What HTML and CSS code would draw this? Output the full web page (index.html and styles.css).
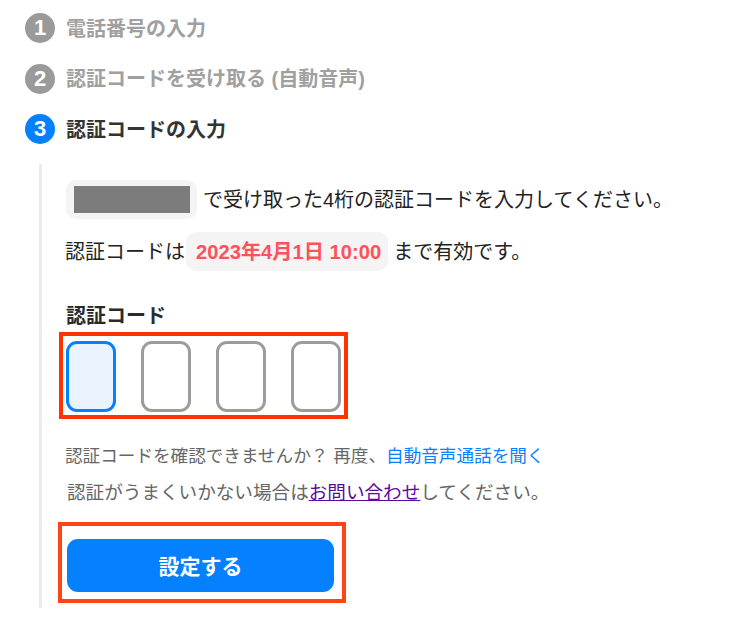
FILE: index.html
```html
<!DOCTYPE html>
<html lang="ja">
<head>
<meta charset="utf-8">
<title>認証コードの入力</title>
<link rel="stylesheet" href="styles.css">
</head>
<body>
<main class="page">
  <ol class="steps">
    <li class="step done"><span class="num">1</span><span class="label">電話番号の入力</span></li>
    <li class="step done"><span class="num">2</span><span class="label">認証コードを受け取る (自動音声)</span></li>
    <li class="step active"><span class="num">3</span><span class="label">認証コードの入力</span></li>
  </ol>
  <section class="panel">
    <p class="line first"><span class="chip"><span class="redact"></span></span><span class="after">で受け取った4桁の認証コードを入力してください。</span></p>
    <p class="line second"><span class="lead">認証コードは</span><span class="chip time">2023年4月1日 10:00</span><span class="after">まで有効です。</span></p>
    <label class="code-label">認証コード</label>
    <div class="mark code-mark">
      <div class="cell focus"></div>
      <div class="cell"></div>
      <div class="cell"></div>
      <div class="cell"></div>
    </div>
    <p class="help one">認証コードを確認できませんか？ 再度、<a class="blue" href="#">自動音声通話を聞く</a></p>
    <p class="help two">認証がうまくいかない場合は<a class="purple" href="#">お問い合わせ</a>してください。</p>
    <div class="mark btn-mark"><button class="submit" type="button">設定する</button></div>
  </section>
</main>
</body>
</html>
```
FILE: styles.css
```css
* { box-sizing: border-box; }
html, body { margin: 0; padding: 0; background: #fff; }
body { font-family: "Liberation Sans", "Noto Sans CJK JP", sans-serif; color: #222; }
.page { width: 737px; height: 628px; overflow: hidden; padding: 13px 0 0 25px; }
.steps { list-style: none; margin: 0; padding: 0; display: flex; flex-direction: column; gap: 20.5px; }
.step { display: flex; align-items: center; gap: 11px; height: 30px; }
.num { width: 30px; height: 30px; border-radius: 50%; display: flex; align-items: center; justify-content: center; color: #fff; font-size: 22px; font-weight: 700; background: #9a9a9a; }
.label { font-size: 20px; font-weight: 700; line-height: 30px; padding-top: 1px; }
.done .label { color: #a0a0a0; }
.active .num { background: #0580ff; }
.active .label { color: #333; }
.panel { margin: 20px 0 0 14px; border-left: 3px solid #ececec; padding: 16px 0 0 24px; height: 444px; }
.line { margin: 0; display: flex; align-items: center; font-size: 20px; color: #222; height: 39px; }
.second { margin-top: 13px; }
.chip { background: #f4f4f4; border-radius: 10px; height: 39px; display: flex; align-items: center; }
.first .chip { width: 131px; padding-left: 8px; }
.redact { display: block; width: 116px; height: 27px; background: #7c7c7c; }
.after { margin-left: 5px; padding-bottom: 2px; }
.first .after { margin-left: 6px; }
.lead { margin-left: -1px; margin-right: 1px; padding-bottom: 2px; }
.time { color: #ff5159; font-size: 20.2px; font-weight: 700; padding: 0 7px 2px 10px; }
.code-label { display: block; margin-top: 31px; font-size: 20px; font-weight: 700; line-height: 28px; color: #2a2a2a; }
.mark { border: 4px solid #ff3300; }
.code-mark { margin: 2px 0 0 -7px; width: 289px; height: 87px; padding: 5px 0 0 3px; display: flex; gap: 25px; }
.cell { width: 50px; height: 71px; border: 3px solid #9c9c9c; border-radius: 11px; background: #fff; }
.cell.focus { border-color: #0580ff; background: #eaf4ff; }
.help { margin: 0; font-size: 17.6px; line-height: 26px; color: #666; }
.one { margin: 24px 0 0 -1px; }
.two { margin-top: 11px; padding-left: 1px; font-size: 18.6px; }
.blue { color: #0a7fff; text-decoration: none; }
.purple { color: #5a0aa0; text-decoration: underline; }
.btn-mark { margin: 16px 0 0 -8px; width: 288px; height: 81px; border-color: #ff4516; padding: 13px 0 0 5px; }
.submit { display: block; width: 267px; height: 53px; border: 0; border-radius: 11px; padding: 0 0 2px; background: #0580ff; color: #fff; font: 700 21px "Liberation Sans", "Noto Sans CJK JP", sans-serif; }
```
